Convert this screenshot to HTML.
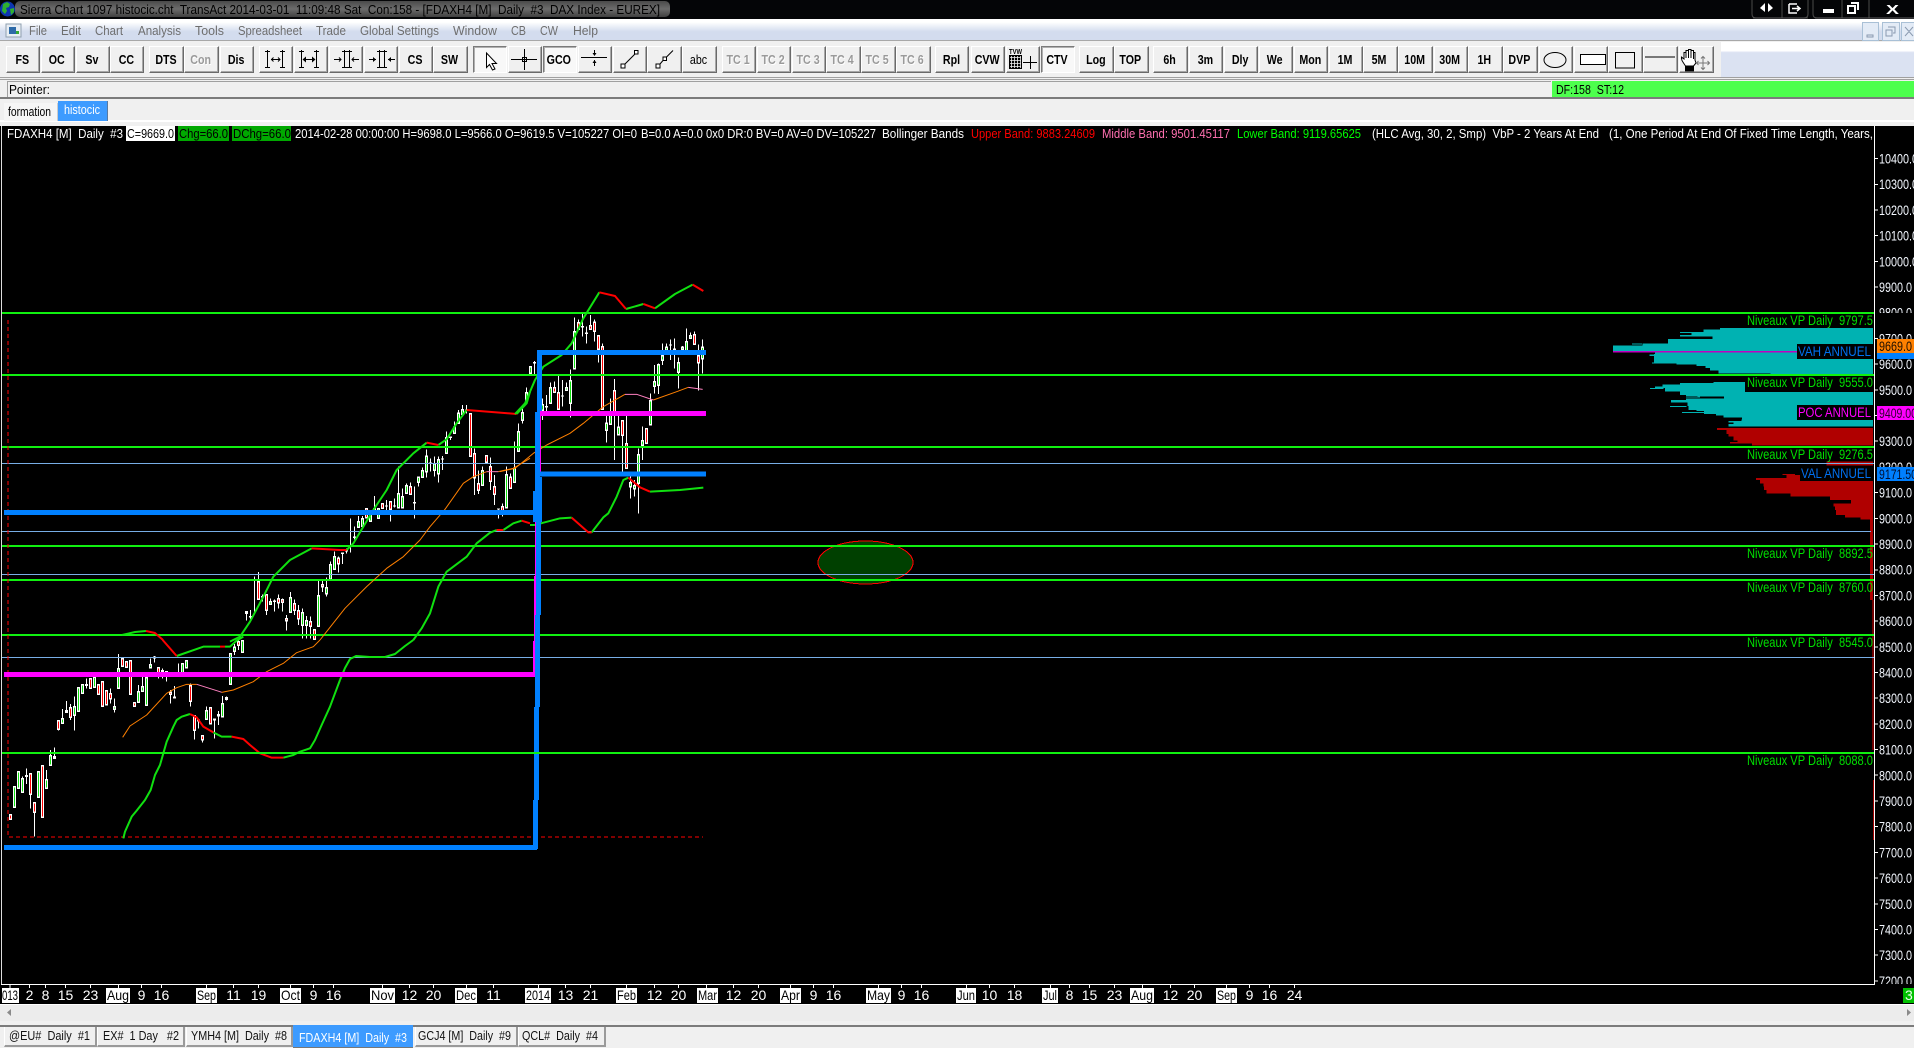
<!DOCTYPE html>
<html><head><meta charset="utf-8"><title>Sierra Chart</title>
<style>
html,body{margin:0;padding:0;background:#000;width:1914px;height:1048px;overflow:hidden}
body{position:relative;font-family:"Liberation Sans",sans-serif}
.r{position:absolute}
.b{position:absolute;top:46px;height:27px;box-sizing:border-box;background:#f0f0f0;border:1px solid;border-color:#fff #6a6a6a #6a6a6a #fff;box-shadow:inset -1px -1px 0 #a8a8a8;font:bold 13px/25px "Liberation Sans",sans-serif;color:#000;text-align:center;white-space:nowrap;overflow:hidden;padding-right:2px}
.b span{display:inline-block;transform:scaleX(.82)}
.d{color:#9a9a9a;text-shadow:1px 1px 0 #fff}
.p{background:#f8f8f8;border-color:#7a7a7a #fff #fff #7a7a7a;box-shadow:inset 1px 1px 0 #b0b0b0}
svg{position:absolute;left:0;top:0}
svg text{font-family:"Liberation Sans",sans-serif;white-space:pre}
</style></head><body>
<div class="r" style="left:0;top:19px;width:1914px;height:22px;background:linear-gradient(#fff 0,#fff 15%,#d3dcee 60%,#d3dcee 100%);border-bottom:1px solid #a8a8a8;box-sizing:border-box"></div>
<div class="r" style="left:0;top:41px;width:1914px;height:85px;background:#f0f0f0"></div>
<div class="r" style="left:1721px;top:42px;width:193px;height:35px;background:linear-gradient(#fff 0,#fff 25%,#dbe2f2 30%,#dbe2f2 100%)"></div>
<div class="r" style="left:0;top:77px;width:1914px;height:1px;background:#a0a0a0"></div>
<div class="r" style="left:0;top:79px;width:1914px;height:1px;background:#a0a0a0"></div>
<div class="r" style="left:7px;top:81px;width:1543px;height:16px;border-left:1px solid #a0a0a0;border-top:1px solid #a0a0a0"></div>
<div class="r" style="left:1552px;top:81px;width:362px;height:16px;background:#4dff4d"></div>
<div class="r" style="left:0;top:97px;width:1914px;height:2px;background:#7c7c7c"></div>
<div class="r" style="left:0;top:120px;width:1914px;height:2px;background:#fff"></div>
<div class="r" style="left:4px;top:103px;width:53px;height:18px;background:#f6f6f6;border-right:1px solid #ccc"></div>
<div class="r" style="left:58px;top:101px;width:49px;height:20px;background:#3d9bff;border-right:1px solid #5a7aa0"></div>
<div class="r" style="left:0;top:1004px;width:1914px;height:1px;background:#fff"></div>
<div class="r" style="left:0;top:1005px;width:1914px;height:16px;background:#ececec"></div>
<div class="r" style="left:0;top:1021px;width:1914px;height:27px;background:#f0f0f0"></div>
<div class="r" style="left:0;top:1025px;width:1914px;height:2px;background:#7c7c7c"></div>
<div class="r" style="left:4px;top:1027px;width:90px;height:18px;background:#f0f0f0;border-right:2px solid #9a9a9a;border-bottom:2px solid #9a9a9a;border-left:1px solid #fff"></div>
<div class="r" style="left:97px;top:1027px;width:85px;height:18px;background:#f0f0f0;border-right:2px solid #9a9a9a;border-bottom:2px solid #9a9a9a;border-left:1px solid #fff"></div>
<div class="r" style="left:186px;top:1027px;width:104px;height:18px;background:#f0f0f0;border-right:2px solid #9a9a9a;border-bottom:2px solid #9a9a9a;border-left:1px solid #fff"></div>
<div class="r" style="left:293px;top:1025px;width:120px;height:22px;background:#3d9bff;border-bottom:1px solid #777"></div>
<div class="r" style="left:415px;top:1027px;width:100px;height:18px;background:#f0f0f0;border-right:2px solid #9a9a9a;border-bottom:2px solid #9a9a9a;border-left:1px solid #fff"></div>
<div class="r" style="left:518px;top:1027px;width:85px;height:18px;background:#f0f0f0;border-right:2px solid #9a9a9a;border-bottom:2px solid #9a9a9a;border-left:1px solid #fff"></div>

<div class="b" style="left:6px;width:34px"><span>FS</span></div>
<div class="b" style="left:41px;width:34px"><span>OC</span></div>
<div class="b" style="left:76px;width:34px"><span>Sv</span></div>
<div class="b" style="left:110px;width:34px"><span>CC</span></div>
<div class="b" style="left:149px;width:35px"><span>DTS</span></div>
<div class="b d" style="left:184px;width:35px"><span>Con</span></div>
<div class="b" style="left:220px;width:34px"><span>Dis</span></div>
<div class="b" style="left:259px;width:34px"></div>
<div class="b" style="left:294px;width:34px"></div>
<div class="b" style="left:329px;width:34px"></div>
<div class="b" style="left:364px;width:34px"></div>
<div class="b" style="left:399px;width:34px"><span>CS</span></div>
<div class="b" style="left:433px;width:35px"><span>SW</span></div>
<div class="b p" style="left:473px;width:34px"></div>
<div class="b" style="left:508px;width:34px"></div>
<div class="b p" style="left:543px;width:34px"><span>GCO</span></div>
<div class="b" style="left:578px;width:34px"></div>
<div class="b" style="left:613px;width:34px"></div>
<div class="b" style="left:647px;width:35px"></div>
<div class="b" style="left:682px;width:35px;font-weight:normal"><span>abc</span></div>
<div class="b d" style="left:722px;width:34px"><span>TC 1</span></div>
<div class="b d" style="left:757px;width:34px"><span>TC 2</span></div>
<div class="b d" style="left:792px;width:34px"><span>TC 3</span></div>
<div class="b d" style="left:826px;width:35px"><span>TC 4</span></div>
<div class="b d" style="left:861px;width:35px"><span>TC 5</span></div>
<div class="b d" style="left:896px;width:35px"><span>TC 6</span></div>
<div class="b" style="left:935px;width:34px"><span>Rpl</span></div>
<div class="b" style="left:971px;width:34px"><span>CVW</span></div>
<div class="b" style="left:1006px;width:34px"></div>
<div class="b p" style="left:1041px;width:34px"><span>CTV</span></div>
<div class="b" style="left:1079px;width:35px"><span>Log</span></div>
<div class="b" style="left:1114px;width:35px"><span>TOP</span></div>
<div class="b" style="left:1153px;width:35px"><span>6h</span></div>
<div class="b" style="left:1189px;width:34px"><span>3m</span></div>
<div class="b" style="left:1224px;width:34px"><span>Dly</span></div>
<div class="b" style="left:1259px;width:34px"><span>We</span></div>
<div class="b" style="left:1294px;width:34px"><span>Mon</span></div>
<div class="b" style="left:1329px;width:34px"><span>1M</span></div>
<div class="b" style="left:1363px;width:35px"><span>5M</span></div>
<div class="b" style="left:1398px;width:35px"><span>10M</span></div>
<div class="b" style="left:1434px;width:34px"><span>30M</span></div>
<div class="b" style="left:1468px;width:35px"><span>1H</span></div>
<div class="b" style="left:1503px;width:35px"><span>DVP</span></div>
<div class="b" style="left:1539px;width:34px"></div>
<div class="b" style="left:1574px;width:34px"></div>
<div class="b" style="left:1608px;width:35px"></div>
<div class="b" style="left:1643px;width:35px"></div>
<div class="b" style="left:1679px;width:35px"></div>

<svg width="1914" height="1048" viewBox="0 0 1914 1048">
<defs>
<linearGradient id="glow" x1="0" y1="0" x2="0" y2="1"><stop offset="0" stop-color="#4a4a4a"/><stop offset=".5" stop-color="#6c6c6c"/><stop offset="1" stop-color="#404040"/></linearGradient>
<path id="g7" d="M43 442V499M55 397V443M67 419V455M115 397V470M139 421V443M151 349V374M187 238V247M223 202V223M235 145V212M247 137V158M283 114V139M343 202V206M355 89V142M415 158V184M427 142V151M439 116V193M451 76V81M547 74V96M559 64V81M619 214V235M667 194V228M691 44V131M703 24V31M727 4V34"/>
<path id="r7" d="M31 526V536M91 404V461M103 491V515M127 379V529M163 352V353M175 244V266M199 214V215M211 206V230M271 118V142M295 136V160M307 127V196M319 154V192M331 164V174M367 58V76M379 68V79M391 65V161M403 191V196M475 86V96M511 159V160M571 140V182M583 229V268M607 290V297M631 206V249M679 175V176M715 8V13"/>
<path id="g8" d="M121 668V671M181 656V694M217 701V733M229 724V734M265 649V736M289 626V639M301 556V596M313 532V566M385 428V440M397 419V436M421 409V421M445 389V412M505 344V381M517 352V381M529 319V338M565 294V304M577 274V289M589 231V273M613 254V268M625 242V279M649 176V218M673 144V158M685 102V128M697 91V101M757 274V313M829 287V381M853 267V304M865 157V211M877 101V118M889 41V58"/>
<path id="r8" d="M49 697V698M85 607V656M109 646V688M145 659V666M157 662V664M169 719V720M193 674V689M205 694V714M241 727V736M253 752V776M277 616V618M325 537V549M409 389V411M433 389V396M457 374V383M481 368V386M541 322V341M721 104V226M733 224V291M745 314V328M769 230V244M781 262V301M793 323V341M817 382V396M841 294V323"/>
<path id="g6" d="M91 262V278M127 376V388M151 326V368M199 326V328M211 304V368M223 158V264M319 432V448M331 404V431M355 444V462M391 610V618M403 619V624M415 526V608M427 484V494M451 364V432M463 308V316M475 257V314M487 229V238M499 204V208M535 251V275M547 204V206M559 187V221M571 169V173M607 204V234"/>
<path id="r6" d="M163 326V334M175 341V386M235 131V146M271 139V146M283 129V151M295 169V206M307 202V386M343 334V396M367 424V463M379 494V562M439 449V488M583 166V191M595 229V246"/>
</defs>

<!-- title bar -->
<rect x="0" y="0" width="1914" height="19" fill="#040507"/>
<rect x="15" y="1" width="655" height="16" rx="5" fill="url(#glow)"/>
<circle cx="7.500" cy="9" r="7.500" fill="#0d36b0"/>
<path d="M3 4l4-2 3 2-1 3-3 1 1 3-2 3-3-3zM10 9l4-1 0 4-3 3z" fill="#2fb030"/>
<text x="20" y="14" font-size="13" fill="#000" textLength="640" lengthAdjust="spacingAndGlyphs">Sierra Chart 1097 histocic.cht  TransAct 2014-03-01  11:09:48 Sat  Con:158 - [FDAXH4 [M]  Daily  #3  DAX Index - EUREX]</text>
<path d="M1752 0V14q0 4 4 4H1804q4 0 4-4V0M1782 0V18M1813 0V14q0 4 4 4H1914M1842 0V18M1869 0V18" fill="none" stroke="#4a4a4a"/>
<path d="M1765 3L1760 8L1765 12ZM1768 3L1773 8L1768 12Z" fill="#fff"/>
<path d="M1789 4H1797M1789 4V13H1797M1792 8.500H1800M1797 6L1800 8.500L1797 11" fill="none" stroke="#fff" stroke-width="1.500"/>
<rect x="1823" y="9" width="11" height="4" fill="#fff"/>
<path d="M1848 6h7v7h-7zM1851 3h7v7" fill="none" stroke="#fff" stroke-width="2"/>
<text x="1886" y="14" font-size="13" font-weight="bold" fill="#fff" textLength="13" lengthAdjust="spacingAndGlyphs">X</text>
<path d="M1753 18h55M1815 18h99" stroke="#777" stroke-width="1" opacity=".5"/>

<!-- menu -->
<rect x="6" y="24" width="15" height="13" fill="#e8eef4" stroke="#90a0b0"/><rect x="9" y="27" width="7" height="7" fill="#2d6aa8"/><rect x="16" y="31" width="3" height="3" fill="#3a3"/>
<g font-size="13" fill="#6e6e6e">
<text x="29" y="35" textLength="18" lengthAdjust="spacingAndGlyphs">File</text>
<text x="61" y="35" textLength="20" lengthAdjust="spacingAndGlyphs">Edit</text>
<text x="95" y="35" textLength="28" lengthAdjust="spacingAndGlyphs">Chart</text>
<text x="138" y="35" textLength="43" lengthAdjust="spacingAndGlyphs">Analysis</text>
<text x="195" y="35" textLength="29" lengthAdjust="spacingAndGlyphs">Tools</text>
<text x="238" y="35" textLength="64" lengthAdjust="spacingAndGlyphs">Spreadsheet</text>
<text x="316" y="35" textLength="30" lengthAdjust="spacingAndGlyphs">Trade</text>
<text x="360" y="35" textLength="79" lengthAdjust="spacingAndGlyphs">Global Settings</text>
<text x="453" y="35" textLength="44" lengthAdjust="spacingAndGlyphs">Window</text>
<text x="511" y="35" textLength="15" lengthAdjust="spacingAndGlyphs">CB</text>
<text x="540" y="35" textLength="18" lengthAdjust="spacingAndGlyphs">CW</text>
<text x="573" y="35" textLength="25" lengthAdjust="spacingAndGlyphs">Help</text>
</g>
<g fill="#e3ebf6" stroke="#a9c0d6"><rect x="1862.500" y="22.500" width="16" height="18"/><rect x="1882.500" y="22.500" width="17" height="18"/><rect x="1901.500" y="22.500" width="14" height="18"/></g>
<path d="M1867 35h6v2h-6zM1888 27h7v6h-2M1886 30h6v6h-6zM1905 27l8 9M1913 27l-8 9" fill="none" stroke="#8a9ab0"/>

<!-- button icons -->
<g fill="none" stroke="#000" stroke-width="1" shape-rendering="crispEdges">
<path d="M267.500 50V68M265 51.500h5M265 67.500h5M282.500 50V68M280 51.500h5M280 67.500h5M271 59.500h9"/>
<path d="M273.500 57.500l-2 2 2 2M278 57.500l2 2-2 2" shape-rendering="auto"/>
<path d="M301.500 50V68M299 51.500h5M299 67.500h5M316.500 50V68M314 51.500h5M314 67.500h5M305 59.500h8"/>
<path d="M344.500 50V68M342 51.500h5M342 67.500h5M349.500 50V68M347 51.500h5M347 67.500h5M334 59.500h7M352 59.500h7"/>
<path d="M339 57.500l2 2-2 2M354 57.500l-2 2 2 2" shape-rendering="auto"/>
<path d="M379.500 50V68M377 51.500h5M377 67.500h5M384.500 50V68M382 51.500h5M382 67.500h5M369 59.500h7M388 59.500h7"/>
<path d="M511 59.500h26M524.500 49V70"/><rect x="522.500" y="57.500" width="4" height="4"/>
<path d="M581 57.500h26M594.500 50V55M594.500 60V66"/>
<rect x="621" y="64" width="4" height="4" fill="#fff"/>
<rect x="656" y="64" width="4" height="4" fill="#fff"/><rect x="663" y="57" width="3.500" height="3.500" fill="#fff"/>
</g>
<path d="M306 56.500l-3.500 3 3.500 3zM312 56.500l3.500 3-3.500 3zM373 57l3 2.500-3 2.500zM391 57l-3 2.500 3 2.500zM592.500 53h4l-2 3zM592.500 63h4l-2-3z" fill="#000"/>
<path d="M625 64L637 52" fill="none" stroke="#000"/>
<rect x="634.500" y="50.500" width="3.500" height="3.500" fill="#fff" stroke="#000"/>
<path d="M660 64L663 60.500M666.500 57L673 50.500" fill="none" stroke="#000"/>
<path d="M486.500 53V67.500L489.500 64.500L492.500 70L495 69L492 63.500H496.500Z" fill="#fff" stroke="#000"/>
<!-- table icon -->
<text x="1009" y="54" font-size="7" font-weight="bold" fill="#000" textLength="13" lengthAdjust="spacingAndGlyphs">TVW</text>
<rect x="1009" y="55" width="13" height="14" fill="#000"/>
<path d="M1011.500 56V68M1014.500 56V68M1017.500 56V68M1020.500 56V68M1010 57.500H1021M1010 60.500H1021M1010 63.500H1021M1010 66.500H1021" stroke="#f0f0f0" stroke-width=".8"/>
<path d="M1023 62.500H1037M1030.500 56V69" stroke="#000" fill="none"/>
<!-- shapes -->
<ellipse cx="1555" cy="60" rx="11" ry="7.500" fill="none" stroke="#000"/>
<rect x="1580.500" y="54.500" width="25" height="10" fill="#fff" stroke="#000"/>
<rect x="1615.500" y="52.500" width="19" height="15.500" fill="none" stroke="#000"/>
<path d="M1645 57H1675" stroke="#000"/>
<path d="M1685.500 66C1683 62 1681 60 1681.500 57L1684 59V52.500H1686V50.500H1688.500V49.500H1691V50.500H1693.500V52.500H1695V60L1696 63L1693.500 66Z" fill="#fff" stroke="#000"/>
<path d="M1686 52.500V58M1688.500 50.500V58M1691 50.500V58M1693.500 52.500V59" stroke="#000" fill="none"/>
<rect x="1685" y="66" width="9" height="5.500" fill="#000"/>
<path d="M1703 56.500V69.500M1696.500 63H1709.500M1701 58.500L1703 56.500L1705 58.500M1701 67.500L1703 69.500L1705 67.500M1698.500 61L1696.500 63L1698.500 65M1707.500 61L1709.500 63L1707.500 65" fill="none" stroke="#777"/>

<!-- status row -->
<text x="9" y="94" font-size="13" fill="#000" textLength="41" lengthAdjust="spacingAndGlyphs">Pointer:</text>
<text x="1556" y="94" font-size="13" fill="#000" textLength="68" lengthAdjust="spacingAndGlyphs">DF:158  ST:12</text>
<text x="8" y="116" font-size="13" fill="#000" textLength="43" lengthAdjust="spacingAndGlyphs">formation</text>
<text x="64" y="114" font-size="13" fill="#fff" textLength="36" lengthAdjust="spacingAndGlyphs">histocic</text>

<!-- chart -->
<rect x="0" y="126" width="1914" height="878" fill="#000"/>
<rect x="1" y="126" width="1" height="858" fill="#ddd"/>
<rect x="1874" y="126" width="1" height="859" fill="#fff"/>
<rect x="1" y="984" width="1874" height="1" fill="#fff"/>

<!-- header -->
<rect x="126" y="126" width="49" height="15" fill="#fff"/>
<rect x="178" y="126" width="51" height="15" fill="#00a800"/>
<rect x="232" y="126" width="59" height="15" fill="#00a800"/>
<g font-size="13" fill="#fff">
<text x="7" y="138" textLength="116" lengthAdjust="spacingAndGlyphs">FDAXH4 [M]  Daily  #3</text>
<text x="127" y="138" fill="#000" textLength="47" lengthAdjust="spacingAndGlyphs">C=9669.0</text>
<text x="179" y="138" fill="#000" textLength="49" lengthAdjust="spacingAndGlyphs">Chg=66.0</text>
<text x="233" y="138" fill="#000" textLength="58" lengthAdjust="spacingAndGlyphs">DChg=66.0</text>
<text x="295" y="138" textLength="342" lengthAdjust="spacingAndGlyphs">2014-02-28 00:00:00 H=9698.0 L=9566.0 O=9619.5 V=105227 OI=0</text>
<text x="641" y="138" textLength="235" lengthAdjust="spacingAndGlyphs">B=0.0 A=0.0 0x0 DR:0 BV=0 AV=0 DV=105227</text>
<text x="882" y="138" textLength="82" lengthAdjust="spacingAndGlyphs">Bollinger Bands</text>
<text x="971" y="138" fill="#ff0000" textLength="124" lengthAdjust="spacingAndGlyphs">Upper Band: 9883.24609</text>
<text x="1102" y="138" fill="#ff70b0" textLength="128" lengthAdjust="spacingAndGlyphs">Middle Band: 9501.45117</text>
<text x="1237" y="138" fill="#00ff00" textLength="124" lengthAdjust="spacingAndGlyphs">Lower Band: 9119.65625</text>
<text x="1372" y="138" textLength="227" lengthAdjust="spacingAndGlyphs">(HLC Avg, 30, 2, Smp)  VbP - 2 Years At End</text>
<text x="1609" y="138" textLength="264" lengthAdjust="spacingAndGlyphs">(1, One Period At End Of Fixed Time Length, Years,</text>
</g>

<!-- price axis -->
<g fill="#fff" shape-rendering="crispEdges"><path d="M1875 158.500h3M1875 184.500h3M1875 210h3M1875 235.500h3M1875 261.500h3M1875 287h3M1875 338.500h3M1875 364h3M1875 390h3M1875 415.500h3M1875 441h3M1875 492.500h3M1875 518.500h3M1875 544h3M1875 570h3M1875 595.500h3M1875 621h3M1875 647h3M1875 672.500h3M1875 698h3M1875 724h3M1875 749.500h3M1875 775h3M1875 801h3M1875 826.500h3M1875 852.500h3M1875 878h3M1875 904h3M1875 929.500h3M1875 955h3M1875 981h3" stroke="#fff"/></g>
<g font-size="14" fill="#f4f8ff">
<text x="1879" y="163.500" textLength="39" lengthAdjust="spacingAndGlyphs">10400.0</text>
<text x="1879" y="189.200" textLength="39" lengthAdjust="spacingAndGlyphs">10300.0</text>
<text x="1879" y="214.900" textLength="39" lengthAdjust="spacingAndGlyphs">10200.0</text>
<text x="1879" y="240.600" textLength="39" lengthAdjust="spacingAndGlyphs">10100.0</text>
<text x="1879" y="266.300" textLength="39" lengthAdjust="spacingAndGlyphs">10000.0</text>
<text x="1879" y="292" textLength="33" lengthAdjust="spacingAndGlyphs">9900.0</text>
<text x="1879" y="317.700" textLength="33" lengthAdjust="spacingAndGlyphs">9800.0</text>
<text x="1879" y="343.400" textLength="33" lengthAdjust="spacingAndGlyphs">9700.0</text>
<text x="1879" y="369.100" textLength="33" lengthAdjust="spacingAndGlyphs">9600.0</text>
<text x="1879" y="394.800" textLength="33" lengthAdjust="spacingAndGlyphs">9500.0</text>
<text x="1879" y="446.200" textLength="33" lengthAdjust="spacingAndGlyphs">9300.0</text>
<text x="1879" y="471.900" textLength="33" lengthAdjust="spacingAndGlyphs">9200.0</text>
<text x="1879" y="497.600" textLength="33" lengthAdjust="spacingAndGlyphs">9100.0</text>
<text x="1879" y="523.300" textLength="33" lengthAdjust="spacingAndGlyphs">9000.0</text>
<text x="1879" y="549" textLength="33" lengthAdjust="spacingAndGlyphs">8900.0</text>
<text x="1879" y="574.700" textLength="33" lengthAdjust="spacingAndGlyphs">8800.0</text>
<text x="1879" y="600.400" textLength="33" lengthAdjust="spacingAndGlyphs">8700.0</text>
<text x="1879" y="626.100" textLength="33" lengthAdjust="spacingAndGlyphs">8600.0</text>
<text x="1879" y="651.800" textLength="33" lengthAdjust="spacingAndGlyphs">8500.0</text>
<text x="1879" y="677.500" textLength="33" lengthAdjust="spacingAndGlyphs">8400.0</text>
<text x="1879" y="703.200" textLength="33" lengthAdjust="spacingAndGlyphs">8300.0</text>
<text x="1879" y="728.900" textLength="33" lengthAdjust="spacingAndGlyphs">8200.0</text>
<text x="1879" y="754.600" textLength="33" lengthAdjust="spacingAndGlyphs">8100.0</text>
<text x="1879" y="780.300" textLength="33" lengthAdjust="spacingAndGlyphs">8000.0</text>
<text x="1879" y="806" textLength="33" lengthAdjust="spacingAndGlyphs">7900.0</text>
<text x="1879" y="831.700" textLength="33" lengthAdjust="spacingAndGlyphs">7800.0</text>
<text x="1879" y="857.400" textLength="33" lengthAdjust="spacingAndGlyphs">7700.0</text>
<text x="1879" y="883.100" textLength="33" lengthAdjust="spacingAndGlyphs">7600.0</text>
<text x="1879" y="908.800" textLength="33" lengthAdjust="spacingAndGlyphs">7500.0</text>
<text x="1879" y="934.500" textLength="33" lengthAdjust="spacingAndGlyphs">7400.0</text>
<text x="1879" y="960.200" textLength="33" lengthAdjust="spacingAndGlyphs">7300.0</text>
<text x="1879" y="985.900" textLength="33" lengthAdjust="spacingAndGlyphs">7200.0</text>
</g>
<rect x="1876" y="313" width="38" height="12" fill="#000"/>
<rect x="0" y="985" width="1914" height="19" fill="#000"/>
<rect x="1875" y="984" width="39" height="1" fill="#000"/>

<!-- candles: z7 -->
<g transform="translate(0,640) scale(.33333)" fill="none" shape-rendering="crispEdges">
<path stroke="#fff" stroke-width="3" d="M67 410V459M79 385V432M91 400V505M103 487V590M127 375V533M139 390V447M151 330V378M163 323V356M175 240V272M187 207V251M199 183V218M211 192V240M223 170V272M235 141V216M259 115V145M283 100V143M331 145V190M343 175V218M355 42V146M415 135V188M427 110V155M439 100V197M451 55V85M463 48V68M475 82V115M487 85V115M499 95V125M511 150V190M523 138V175M535 70V100M571 130V200M583 225V298M595 241V266M607 286V308M619 200V239M643 238V296M655 213V255M667 168V232M679 170V182M703 12V45M715 0V30"/>
<path stroke="#fff" stroke-width="9" d="M79 405V411M259 132V138M463 50V56M487 90V96M499 93V99M523 170V176M595 239V245M643 236V242M655 222V230"/>
<use href="#g7" stroke="#fff" stroke-width="9" stroke-linecap="square"/><use href="#r7" stroke="#fff" stroke-width="9" stroke-linecap="square"/>
<use href="#g7" stroke="#10e010" stroke-width="3"/><use href="#r7" stroke="#ff0000" stroke-width="3"/>
</g>
<!-- candles: z8 -->
<g transform="translate(230,380) scale(.33333)" fill="none" shape-rendering="crispEdges">
<path stroke="#fff" stroke-width="3" d="M49 694V722M61 690V717M73 590V700M85 576V660M97 643V665M109 642V705M121 655V675M133 658V695M145 643V686M157 655V695M169 705V752M181 636V698M193 658V705M205 675V735M217 685V775M229 708V775M241 710V775M253 748V780M265 600V740M277 603V636M289 592V650M301 545V600M313 515V570M325 530V578M337 517V552M349 505V520M361 415V518M373 440V478M385 408V444M397 408V440M421 390V425M433 348V400M469 360V400M481 364V425M493 355V382M505 260V385M517 325V385M529 310V342M541 308V345M553 320V415M565 290V320M577 262V293M589 208V293M601 235V275M613 230V290M625 230V308M637 228V270M649 155V222M661 170V180M673 125V162M685 90V132M697 75V105M709 75V100M733 205V345M745 272V342M757 260V317M781 232V330M793 285V375M805 385V416M817 370V410M829 260V385M841 280V327M853 185V308M865 130V215M877 85V130M889 22V62"/>
<path stroke="#fff" stroke-width="9" d="M61 708V712M97 648V652M133 662V666M337 518V522M349 510V514M373 470V474M469 376V380M493 376V380M553 366V370M601 248V252M637 235V239M661 170V174M709 88V92M805 385V389"/>
<use href="#g8" stroke="#fff" stroke-width="9" stroke-linecap="square"/><use href="#r8" stroke="#fff" stroke-width="9" stroke-linecap="square"/>
<use href="#g8" stroke="#10e010" stroke-width="3"/><use href="#r8" stroke="#ff0000" stroke-width="3"/>
</g>
<!-- candles: z6 -->
<g transform="translate(500,280) scale(.33333)" fill="none" shape-rendering="crispEdges">
<path stroke="#fff" stroke-width="3" d="M103 243V285M127 355V420M139 345V400M151 308V372M163 305V338M175 288V390M187 300V380M199 308V332M211 268V413M223 112V268M235 118V150M247 100V170M259 140V190M271 105V150M283 118V185M295 165V248M307 190V390M319 400V488M331 355V435M343 297V540M355 405V466M367 420V575M379 395V566M391 590V655M403 600V650M415 505V700M427 440V540M439 445V492M451 340V436M463 255V340M475 250V342M487 190V255M499 190V212M511 178V240M523 175V265M535 232V325M547 198V210M559 145V225M571 158V177M583 155V195M595 193V332M607 178V280"/>
<path stroke="#fff" stroke-width="9" d="M103 246V250M139 378V382M187 346V350M247 138V142M259 158V162M511 193V197M523 206V210"/>
<use href="#g6" stroke="#fff" stroke-width="9" stroke-linecap="square"/><use href="#r6" stroke="#fff" stroke-width="9" stroke-linecap="square"/>
<use href="#g6" stroke="#10e010" stroke-width="3"/><use href="#r6" stroke="#ff0000" stroke-width="3"/>
</g>

<!-- volume profile -->
<g transform="translate(1560,280) scale(.33333)" shape-rendering="crispEdges">
<path fill="#00b2b2" d="M480 144H939V148H480zM430 148H939V156H430zM395 156H939V165H395zM360 156H395V159H360zM360 165H939V170H360zM458 170H939V177H458zM324 177H939V190H324zM216 190H246V193H216zM248 190H939V197H248zM159 197H939V213H159zM285 218H939V222H285zM268 224H316V228H268zM282 222H939V247H282zM276 247H939V250H276zM350 250H939V254H350zM410 254H939V258H410zM436 258H939V264H436zM450 264H939V272H450zM475 272H939V280H475zM632 280H939V284H632zM460 306H939V313H460zM360 309H460V313H360zM307 313H939V320H307zM270 324H310V327H270zM285 320H939V324H285zM315 324H939V335H315zM360 335H939V345H360zM412 345H939V350H412zM378 345H412V348H378zM492 350H939V355H492zM378 350H420V353H378zM378 355H939V360H378zM333 360H939V368H333zM382 368H939V378H382zM330 378H380V381H330zM385 378H939V390H385zM432 390H939V396H432zM410 390H432V393H410zM366 396H432V399H366zM432 396H939V402H432zM468 402H939V406H468zM490 406H939V412H490zM546 412H939V418H546zM505 423H546V427H505zM545 418H939V428H545zM520 428H939V432H520zM506 432H939V440H506z"/>
<path fill="#c000c0" d="M159 213H712V218H159z"/>
<path fill="#b00000" d="M471 444H939V450H471zM500 450H939V462H500zM505 462H939V470H505zM520 470H939V482H520zM510 486H576V491H510zM532 482H939V486H532zM576 486H939V497H576zM800 545H939V557H800zM668 582H705V585H668zM680 585H720V594H680zM720 576H939V594H720zM588 594H939V600H588zM600 600H939V610H600zM610 610H939V620H610zM612 620H939V630H612zM620 630H939V640H620zM692 640H939V650H692zM810 650H939V660H810zM873 660H939V670H873zM820 670H939V680H820zM825 680H939V690H825zM828 690H939V705H828zM855 705H939V712H855zM902 712H939V718H902zM930 718H939V960H930z"/>
</g>
<rect x="1872" y="600" width="2" height="150" fill="#700000"/>
<rect x="1873" y="780" width="1" height="60" fill="#a00000"/>

<!-- thin levels -->
<g shape-rendering="crispEdges">
<path d="M2 463.500H1874M2 531.500H1871M2 574.500H1874M2 657.500H1874" stroke="#78aee6" stroke-width="1"/>
<ellipse cx="865.500" cy="562.500" rx="47.500" ry="21.500" fill="#004000" stroke="#ff0000" stroke-width="1"/>
<path d="M819 574.500H912" stroke="#78aee6" stroke-width="1"/>
<path d="M2 313H1874M2 375H1874M2 447H1874M2 546H1874M2 580H1874M2 635H1874M2 753H1874" stroke="#10f010" stroke-width="2"/>
<path d="M8 320V837H703" stroke="#ff0000" stroke-width="1" stroke-dasharray="4 3" fill="none"/>
</g>

<!-- bollinger bands: lower, middle, upper -->
<g fill="none" stroke-linejoin="round" stroke-linecap="butt">
<path stroke="#10e010" stroke-width="2" d="M340 680L345 668 350 659 356 656 370 657 385 657 395 654 405 646 413.300 640M122 635L135 632 146 631"/>
<path stroke="#ff0000" stroke-width="2" d="M146 631L155 633 163 640"/>
<g transform="translate(0,640) scale(.33333)">
<path stroke="#10e010" stroke-width="6" d="M370 595L375 575 395 530 410 512 435 480 452 450 465 405 480 375 490 340 500 305 520 260 530 240 545 230 570 222M640 277L665 290 695 290M850 353L880 345 900 335 930 325 945 300 965 255 990 200 1005 160 1020 120M530 48L610 20 660 20M675 20L690 20 710 2 730 -10"/>
<path stroke="#ff0000" stroke-width="6" d="M570 222L590 232 610 260 640 277M695 290L730 297 750 315 780 340 815 353 850 353M488 0L530 48M660 20H675"/>
<path stroke="#ff8000" stroke-width="3" d="M368 292L390 258 440 225 500 160 530 143 560 133 590 133M665 157L700 150 760 125 800 95 850 70 890 38 940 20 960 0"/>
<path stroke="#ff80c0" stroke-width="3" d="M590 133L660 155 665 157"/>
</g>
<g transform="translate(230,380) scale(.33333)">
<path stroke="#10e010" stroke-width="6" d="M550 780L575 745 600 700 625 620 650 575 710 530 740 490 780 458 800 450M820 450L850 430 875 422M0 785L30 770 60 725 100 650 130 590 180 540 245 505M350 510L370 490 430 390 470 330 500 270 550 220 590 188M625 195L650 178 680 130 710 90M860 102L890 70 900 35"/>
<path stroke="#ff0000" stroke-width="6" d="M800 450H820M875 422L900 430M245 505L330 510 350 510M590 188L625 195M710 90L860 102"/>
<path stroke="#ff8000" stroke-width="3" d="M270 780L345 685 410 620 470 565 520 530 570 480 600 440 645 388 700 310 730 290 770 275M805 275L850 265 900 235"/>
<path stroke="#ff80c0" stroke-width="3" d="M770 275H805"/>
</g>
<g transform="translate(500,280) scale(.33333)">
<path stroke="#10e010" stroke-width="6" d="M90 735L105 735 130 728 180 715 215 713M275 757L310 712 325 700 350 650 370 600 385 593M450 635L540 630 610 623M45 402L75 370 105 300 130 260 185 225 215 190 250 115 298 37M378 87L430 72M465 85L525 42 578 14"/>
<path stroke="#ff0000" stroke-width="6" d="M215 713L240 735 265 757 275 757M385 593L420 622 450 635M298 37L345 48 378 87M430 72L465 85M578 14L610 33"/>
<path stroke="#ff8000" stroke-width="3" d="M0 575L45 565 100 520 140 495 210 460 250 430 310 380 375 343M460 360L530 335 565 322"/>
<path stroke="#ff80c0" stroke-width="3" d="M375 343L410 343 460 360M565 322L608 328"/>
</g>
</g>

<!-- thick annual levels -->
<g shape-rendering="crispEdges">
<rect x="4" y="672" width="531" height="5" fill="#ff00ff"/>
<rect x="535" y="515" width="1" height="61" fill="#ff00ff"/>
<rect x="534" y="576" width="2" height="65" fill="#ff00ff"/>
<rect x="533" y="641" width="2" height="32" fill="#ff00ff"/>
<rect x="4" y="510" width="530" height="5" fill="#0080ff"/>
<rect x="4" y="845" width="533" height="5" fill="#0080ff"/>
<rect x="537" y="350" width="169" height="5" fill="#0080ff"/>
<rect x="537" y="350" width="5" height="63" fill="#0080ff"/>
<rect x="535" y="412" width="5" height="66" fill="#0080ff"/>
<rect x="535" y="477" width="7" height="15" fill="#0080ff"/>
<rect x="533" y="491" width="9" height="31" fill="#0080ff"/>
<rect x="536" y="522" width="5" height="93" fill="#0080ff"/>
<rect x="535" y="615" width="5" height="92" fill="#0080ff"/>
<rect x="534" y="707" width="5" height="93" fill="#0080ff"/>
<rect x="533" y="800" width="5" height="49" fill="#0080ff"/>
<rect x="540" y="411" width="166" height="5" fill="#ff00ff"/>
<rect x="540" y="414" width="1" height="58" fill="#ff00ff"/>
<rect x="540" y="471.500" width="166" height="5" fill="#0080ff"/>
<path d="M2 753H1874" stroke="#10f010" stroke-width="2"/>
</g>

<!-- level labels -->
<rect x="1745" y="376" width="129" height="16" fill="#000"/>
<rect x="1797" y="344" width="77" height="15" fill="#000"/>
<rect x="1797" y="405" width="77" height="15" fill="#000"/>
<rect x="1800" y="466" width="74" height="15" fill="#000"/>
<g font-size="14" fill="#00e000">
<text x="1747" y="325" textLength="126" lengthAdjust="spacingAndGlyphs">Niveaux VP Daily  9797.5</text>
<text x="1747" y="387" textLength="126" lengthAdjust="spacingAndGlyphs">Niveaux VP Daily  9555.0</text>
<text x="1747" y="459" textLength="126" lengthAdjust="spacingAndGlyphs">Niveaux VP Daily  9276.5</text>
<text x="1747" y="558" textLength="126" lengthAdjust="spacingAndGlyphs">Niveaux VP Daily  8892.5</text>
<text x="1747" y="592" textLength="126" lengthAdjust="spacingAndGlyphs">Niveaux VP Daily  8760.0</text>
<text x="1747" y="647" textLength="126" lengthAdjust="spacingAndGlyphs">Niveaux VP Daily  8545.0</text>
<text x="1747" y="765" textLength="126" lengthAdjust="spacingAndGlyphs">Niveaux VP Daily  8088.0</text>
</g>
<text x="1798" y="356" font-size="14" fill="#0070f0" textLength="73" lengthAdjust="spacingAndGlyphs">VAH ANNUEL</text>
<text x="1798" y="417" font-size="14" fill="#ff00ff" textLength="73" lengthAdjust="spacingAndGlyphs">POC ANNUEL</text>
<text x="1801" y="478" font-size="14" fill="#0070f0" textLength="70" lengthAdjust="spacingAndGlyphs">VAL ANNUEL</text>

<!-- price boxes -->
<rect x="1877" y="352" width="37" height="7" fill="#0080ff"/>
<rect x="1877" y="339" width="37" height="14" fill="#ff8000"/>
<text x="1879" y="351" font-size="14" fill="#201000" textLength="33" lengthAdjust="spacingAndGlyphs">9669.0</text>
<rect x="1877" y="406" width="37" height="14" fill="#ff00ff"/>
<text x="1879" y="418" font-size="14" fill="#300030" textLength="38" lengthAdjust="spacingAndGlyphs">9409.00</text>
<rect x="1877" y="467" width="37" height="14" fill="#0080ff"/>
<text x="1879" y="479" font-size="14" fill="#001030" textLength="38" lengthAdjust="spacingAndGlyphs">9171.50</text>

<!-- time axis -->
<path shape-rendering="crispEdges" stroke="#fff" d="M10 984v4M29.500 984v4M45.500 984v4M65.500 984v4M90.500 984v4M118.500 984v4M141.500 984v4M161.500 984v4M206.500 984v4M233.500 984v4M258.500 984v4M290.500 984v4M313.500 984v4M333.500 984v4M382.500 984v4M409.500 984v4M433.500 984v4M466.500 984v4M493.500 984v4M538.500 984v4M565.500 984v4M590.500 984v4M626.500 984v4M654.500 984v4M678.500 984v4M706.500 984v4M733.500 984v4M758.500 984v4M790.500 984v4M813.500 984v4M833.500 984v4M878.500 984v4M901.500 984v4M921.500 984v4M966.500 984v4M989.500 984v4M1014.500 984v4M1050.500 984v4M1069.500 984v4M1089.500 984v4M1114.500 984v4M1142.500 984v4M1170.500 984v4M1194.500 984v4M1226.500 984v4M1249.500 984v4M1269.500 984v4M1294.500 984v4"/>
<g fill="#fff"><rect x="2" y="988" width="17" height="15"/><rect x="106" y="988" width="24" height="15"/><rect x="196" y="988" width="21" height="15"/><rect x="280" y="988" width="21" height="15"/><rect x="370" y="988" width="25" height="15"/><rect x="455" y="988" width="22" height="15"/><rect x="525" y="988" width="26" height="15"/><rect x="616" y="988" width="21" height="15"/><rect x="697" y="988" width="21" height="15"/><rect x="780" y="988" width="21" height="15"/><rect x="866" y="988" width="25" height="15"/><rect x="956" y="988" width="20" height="15"/><rect x="1042" y="988" width="16" height="15"/><rect x="1130" y="988" width="24" height="15"/><rect x="1216" y="988" width="21" height="15"/></g>
<g font-size="14" fill="#000">
<text x="2" y="1000" textLength="16" lengthAdjust="spacingAndGlyphs">013</text>
<text x="107" y="1000" textLength="22" lengthAdjust="spacingAndGlyphs">Aug</text>
<text x="197" y="1000" textLength="19" lengthAdjust="spacingAndGlyphs">Sep</text>
<text x="281" y="1000" textLength="19" lengthAdjust="spacingAndGlyphs">Oct</text>
<text x="371" y="1000" textLength="23" lengthAdjust="spacingAndGlyphs">Nov</text>
<text x="456" y="1000" textLength="20" lengthAdjust="spacingAndGlyphs">Dec</text>
<text x="526" y="1000" textLength="24" lengthAdjust="spacingAndGlyphs">2014</text>
<text x="617" y="1000" textLength="19" lengthAdjust="spacingAndGlyphs">Feb</text>
<text x="698" y="1000" textLength="19" lengthAdjust="spacingAndGlyphs">Mar</text>
<text x="781" y="1000" textLength="19" lengthAdjust="spacingAndGlyphs">Apr</text>
<text x="867" y="1000" textLength="23" lengthAdjust="spacingAndGlyphs">May</text>
<text x="957" y="1000" textLength="18" lengthAdjust="spacingAndGlyphs">Jun</text>
<text x="1043" y="1000" textLength="14" lengthAdjust="spacingAndGlyphs">Jul</text>
<text x="1131" y="1000" textLength="22" lengthAdjust="spacingAndGlyphs">Aug</text>
<text x="1217" y="1000" textLength="19" lengthAdjust="spacingAndGlyphs">Sep</text>
</g>
<g font-size="14" fill="#fff" text-anchor="middle">
<text x="29.500" y="1000">2</text><text x="45.500" y="1000">8</text><text x="65.500" y="1000">15</text><text x="90.500" y="1000">23</text><text x="141.500" y="1000">9</text><text x="161.500" y="1000">16</text><text x="233.500" y="1000">11</text><text x="258.500" y="1000">19</text><text x="313.500" y="1000">9</text><text x="333.500" y="1000">16</text><text x="409.500" y="1000">12</text><text x="433.500" y="1000">20</text><text x="493.500" y="1000">11</text><text x="565.500" y="1000">13</text><text x="590.500" y="1000">21</text><text x="654.500" y="1000">12</text><text x="678.500" y="1000">20</text><text x="733.500" y="1000">12</text><text x="758.500" y="1000">20</text><text x="813.500" y="1000">9</text><text x="833.500" y="1000">16</text><text x="901.500" y="1000">9</text><text x="921.500" y="1000">16</text><text x="989.500" y="1000">10</text><text x="1014.500" y="1000">18</text><text x="1069.500" y="1000">8</text><text x="1089.500" y="1000">15</text><text x="1114.500" y="1000">23</text><text x="1170.500" y="1000">12</text><text x="1194.500" y="1000">20</text><text x="1249.500" y="1000">9</text><text x="1269.500" y="1000">16</text><text x="1294.500" y="1000">24</text>
</g>
<rect x="1903" y="988" width="11" height="15" fill="#00c000"/>
<text x="1905" y="1000" font-size="14" fill="#e8ffe8">3</text>

<!-- scrollbar arrows -->
<path d="M11 1009L7 1012.500L11 1016ZM1907 1009L1911 1012.500L1907 1016Z" fill="#8a8a8a"/>

<!-- bottom tabs -->
<g font-size="13" fill="#111">
<text x="9" y="1040" textLength="81" lengthAdjust="spacingAndGlyphs">@EU#  Daily  #1</text>
<text x="103" y="1040" textLength="76" lengthAdjust="spacingAndGlyphs">EX#  1 Day   #2</text>
<text x="191" y="1040" textLength="96" lengthAdjust="spacingAndGlyphs">YMH4 [M]  Daily  #8</text>
<text x="299" y="1042" fill="#fff" textLength="108" lengthAdjust="spacingAndGlyphs">FDAXH4 [M]  Daily  #3</text>
<text x="418" y="1040" textLength="93" lengthAdjust="spacingAndGlyphs">GCJ4 [M]  Daily  #9</text>
<text x="522" y="1040" textLength="76" lengthAdjust="spacingAndGlyphs">QCL#  Daily  #4</text>
</g>
</svg>
</body></html>
